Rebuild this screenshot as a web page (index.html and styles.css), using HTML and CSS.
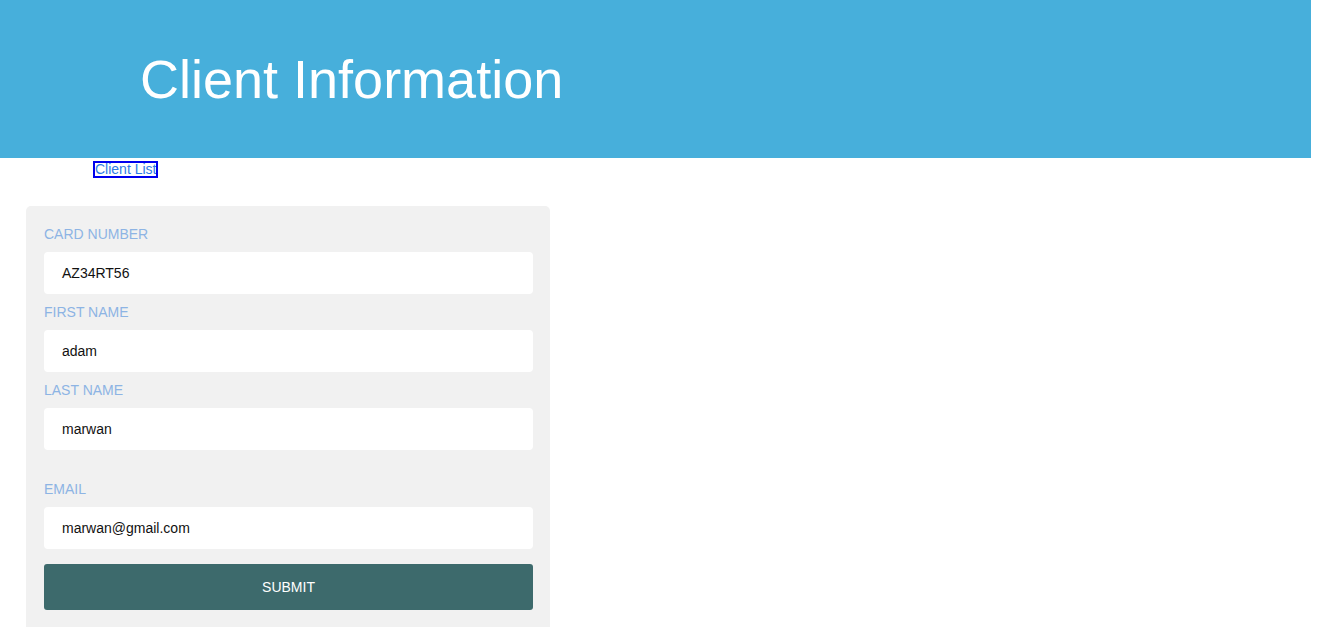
FILE: index.html
```html
<!DOCTYPE html>
<html>
<head>
<meta charset="utf-8">
<link rel="stylesheet" href="styles.css">
</head>
<body>
<header class="banner">
  <h1 class="title">Client Information</h1>
</header>
<nav class="nav">
  <a class="nav-link" href="#">Client List</a>
</nav>
<form class="card">
  <label class="label">CARD NUMBER</label>
  <div class="field">AZ34RT56</div>
  <label class="label">FIRST NAME</label>
  <div class="field">adam</div>
  <label class="label">LAST NAME</label>
  <div class="field">marwan</div>
  <label class="label label-spaced">EMAIL</label>
  <div class="field">marwan@gmail.com</div>
  <button class="submit" type="button">SUBMIT</button>
</form>
</body>
</html>
```

FILE: styles.css
```css
html, body {
  margin: 0;
  padding: 0;
  background: #ffffff;
  font-family: "Liberation Sans", Arial, sans-serif;
  overflow: hidden;
}

.banner {
  width: 1311px;
  height: 158px;
  background: #47afdb;
  display: flex;
  align-items: center;
  padding-left: 140px;
  box-sizing: border-box;
}

.title {
  margin: 0;
  color: #ffffff;
  font-weight: normal;
  font-size: 54px;
  line-height: 1;
}

.nav {
  padding-left: 93px;
  padding-top: 2px;
  height: 46px;
  box-sizing: border-box;
}

.nav-link {
  display: inline-block;
  font-size: 14px;
  line-height: 17px;
  color: #2f7be6;
  text-decoration: none;
  outline: 2px solid #0000ee;
  outline-offset: -2px;
  padding: 0 2px;
}

.card {
  margin: 2px 0 0 26px;
  width: 524px;
  background: #f1f1f1;
  border-radius: 5px;
  padding: 10px 17px 30px 18px;
  box-sizing: border-box;
  display: flex;
  flex-direction: column;
}

.label {
  display: block;
  font-size: 14px;
  line-height: 18px;
  color: #8db4e4;
  margin: 9px 0 9px;
}

.label-spaced {
  margin-top: 30px;
}

.field {
  height: 42px;
  background: #ffffff;
  border-radius: 4px;
  padding-left: 18px;
  display: flex;
  align-items: center;
  font-size: 14px;
  color: #111111;
}

.submit {
  margin-top: 15px;
  height: 46px;
  border: none;
  border-radius: 3px;
  background: #3d6a6c;
  color: #ffffff;
  font-family: "Liberation Sans", Arial, sans-serif;
  font-size: 14px;
}
```
